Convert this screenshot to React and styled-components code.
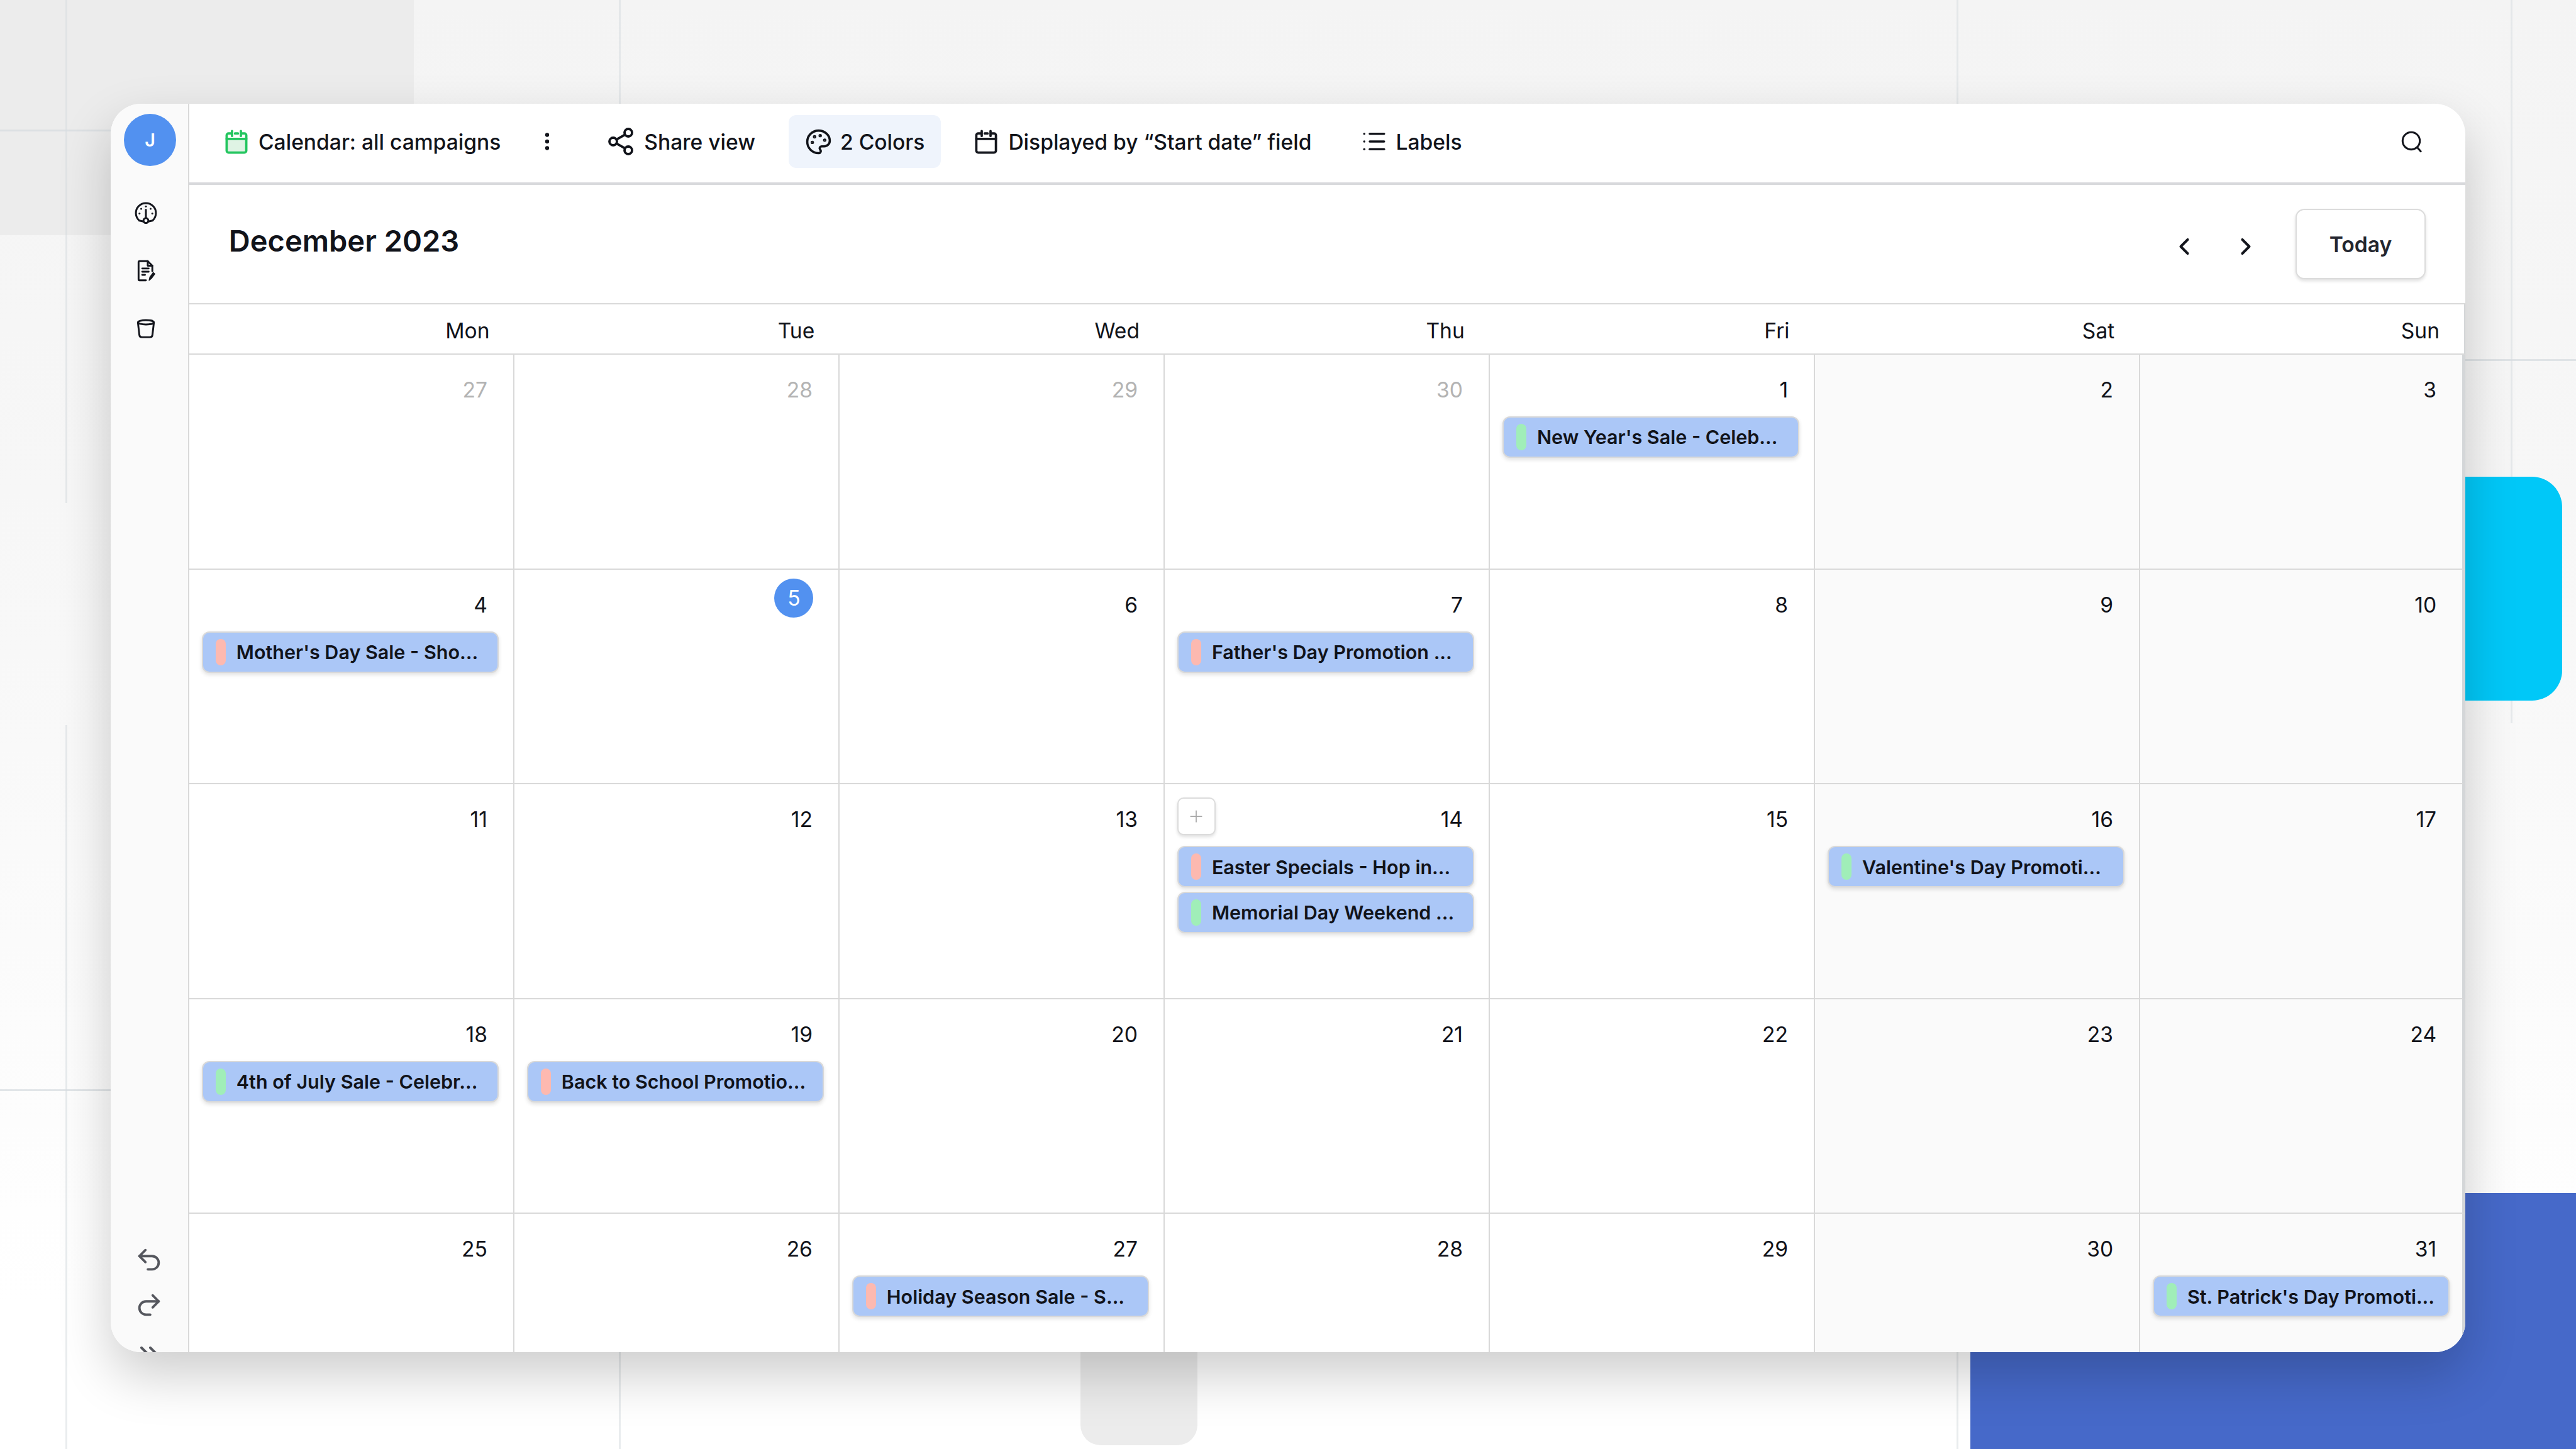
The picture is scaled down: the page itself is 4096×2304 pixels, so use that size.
import React from "react";
import styled, { createGlobalStyle } from "styled-components";
import {
  ChevronLeft,
  ChevronRight,
  ChevronsRight,
  EllipsisVertical,
  List,
  Palette,
  Plus,
  Redo2,
  Share2,
  Undo2,
} from "lucide-react";

const weekDays = ["Mon", "Tue", "Wed", "Thu", "Fri", "Sat", "Sun"];

const PINK = "#fdb9b0";
const GREEN = "#a0eeb8";

const days = [
  { n: 27, muted: true },
  { n: 28, muted: true },
  { n: 29, muted: true },
  { n: 30, muted: true },
  { n: 1, events: [{ title: "New Year's Sale - Celeb...", color: GREEN }] },
  { n: 2 },
  { n: 3 },
  { n: 4, events: [{ title: "Mother's Day Sale - Sho...", color: PINK }] },
  { n: 5, today: true },
  { n: 6 },
  { n: 7, events: [{ title: "Father's Day Promotion ...", color: PINK }] },
  { n: 8 },
  { n: 9 },
  { n: 10 },
  { n: 11 },
  { n: 12 },
  { n: 13 },
  {
    n: 14,
    plus: true,
    events: [
      { title: "Easter Specials - Hop in...", color: PINK },
      { title: "Memorial Day Weekend ...", color: GREEN },
    ],
  },
  { n: 15 },
  { n: 16, events: [{ title: "Valentine's Day Promoti...", color: GREEN }] },
  { n: 17 },
  { n: 18, events: [{ title: "4th of July Sale - Celebr...", color: GREEN }] },
  { n: 19, events: [{ title: "Back to School Promotio...", color: PINK }] },
  { n: 20 },
  { n: 21 },
  { n: 22 },
  { n: 23 },
  { n: 24 },
  { n: 25 },
  { n: 26 },
  { n: 27, events: [{ title: "Holiday Season Sale - S...", color: PINK }] },
  { n: 28 },
  { n: 29 },
  { n: 30 },
  { n: 31, events: [{ title: "St. Patrick's Day Promoti...", color: GREEN }] },
];

const CalendarIcon = ({ color = "#14161d", fill = "none" }) => (
  <svg width="38" height="39" viewBox="0 0 24 25" fill="none" stroke={color} strokeWidth="2.4" strokeLinecap="round" strokeLinejoin="round">
    <path d="M2 10h20v11.5a2 2 0 0 1-2 2H4a2 2 0 0 1-2-2Z" fill={fill} stroke="none" />
    <path d="M6 4H4a2 2 0 0 0-2 2v15.5a2 2 0 0 0 2 2h16a2 2 0 0 0 2-2V6a2 2 0 0 0-2-2h-2" />
    <path d="M7.5 1.5v5M16.5 1.5v5M10.5 4h3M2 9.5h20" />
  </svg>
);

const GaugeIcon = () => (
  <svg width="36" height="36" viewBox="0 0 24 24" fill="none" stroke="#14161d" strokeWidth="2" strokeLinecap="round" strokeLinejoin="round">
    <path d="M9.5 21.5 5 20.5a10.6 10.6 0 1 1 14 0l-4.5 1" />
    <circle cx="12" cy="20.5" r="2.6" />
    <path d="M12 17.5V9" />
    <g fill="#14161d" stroke="none">
      <circle cx="12" cy="5.5" r="1" />
      <circle cx="7" cy="8" r="1" />
      <circle cx="17" cy="8" r="1" />
      <circle cx="5.2" cy="13" r="1" />
      <circle cx="18.8" cy="13" r="1" />
    </g>
  </svg>
);

const NoteIcon = () => (
  <svg width="30" height="35" viewBox="0 0 20 24" fill="none" stroke="#14161d" strokeWidth="2" strokeLinecap="round" strokeLinejoin="round">
    <path d="M10 22.5H3a1 1 0 0 1-1-1v-19a1 1 0 0 1 1-1h9l5 5v6" />
    <path d="M12 1.5v5h5M6 9.5h7M6 13h7M6 16.5h3" />
    <path d="m13.5 22.5.8-3.5 3.7-5 1.7 1.4-3.7 5Z" fill="#14161d" strokeWidth="1" />
  </svg>
);

const BucketIcon = () => (
  <svg width="32" height="33" viewBox="0 0 24 24" fill="none" stroke="#14161d" strokeWidth="2.2" strokeLinecap="round" strokeLinejoin="round">
    <ellipse cx="12" cy="4.5" rx="9.5" ry="2.6" />
    <path d="m2.5 5 1.7 14.5a3 3 0 0 0 3 2.7h9.6a3 3 0 0 0 3-2.7L21.5 5" />
  </svg>
);

const SearchIcon = () => (
  <svg width="37" height="35" viewBox="0 0 24 23" fill="none" stroke="#14161d" strokeWidth="2" strokeLinecap="round">
    <circle cx="11" cy="10.5" r="9" />
    <path d="m17.5 17.5 3.5 4" />
  </svg>
);

const App = () => (
  <>
    <GlobalStyle />
    <Page>
      <CornerBlock />
      <GridLine $x={104} $y={0} $h={800} />
      <GridLine $x={984} $y={0} $h={2304} />
      <GridLine $x={3111} $y={0} $h={2304} />
      <GridLine $x={3992} $y={0} $h={1150} />
      <GridLine $x={104} $y={1153} $h={1151} />
      <GridRule $x={0} $y={206} $w={176} />
      <GridRule $x={0} $y={1732} $w={176} />
      <GridRule $x={3920} $y={571} $w={176} />
      <CyanBlock />
      <TabBlock />
      <BlueBlock />

      <Panel>
        <Rail>
          <Avatar>J</Avatar>
          <RailNav>
            <RailSlot><GaugeIcon /></RailSlot>
            <RailSlot><NoteIcon /></RailSlot>
            <RailSlot><BucketIcon /></RailSlot>
          </RailNav>
          <RailFooter>
            <RailSlot><Undo2 size={46} strokeWidth={2} /></RailSlot>
            <RailSlot><Redo2 size={46} strokeWidth={2} /></RailSlot>
            <CollapseSlot><ChevronsRight size={50} strokeWidth={2} /></CollapseSlot>
          </RailFooter>
        </Rail>

        <Main>
          <Toolbar>
            <ViewName>
              <CalendarIcon color="#22c55e" fill="#dff3e4" />
              Calendar: all campaigns
            </ViewName>
            <MoreButton>
              <EllipsisVertical size={36} strokeWidth={2.2} />
            </MoreButton>
            <ToolButton>
              <Share2 size={48} strokeWidth={1.9} />
              Share view
            </ToolButton>
            <ToolButton $active>
              <Palette size={43} strokeWidth={2} />
              2 Colors
            </ToolButton>
            <ToolButton>
              <IconGap>
                <CalendarIcon />
              </IconGap>
              Displayed by “Start date” field
            </ToolButton>
            <ToolButton>
              <List size={42} strokeWidth={2} />
              Labels
            </ToolButton>
            <SearchButton>
              <SearchIcon />
            </SearchButton>
          </Toolbar>

          <MonthBar>
            <MonthTitle>December 2023</MonthTitle>
            <MonthNav>
              <ArrowButton><ChevronLeft size={44} strokeWidth={2.2} /></ArrowButton>
              <ArrowButton><ChevronRight size={44} strokeWidth={2.2} /></ArrowButton>
              <TodayButton>Today</TodayButton>
            </MonthNav>
          </MonthBar>

          <WeekHeader>
            {weekDays.map((name) => (
              <WeekDay key={name}>{name}</WeekDay>
            ))}
          </WeekHeader>

          <MonthGrid>
            {days.map((day, i) => (
              <DayCell key={i} $weekend={i % 7 >= 5} $last={i % 7 === 6}>
                <DayTop>
                  {day.plus && (
                    <AddButton>
                      <Plus size={30} strokeWidth={1.4} />
                    </AddButton>
                  )}
                  {day.today ? (
                    <TodayMark>{day.n}</TodayMark>
                  ) : (
                    <DayNumber $muted={day.muted}>{day.n}</DayNumber>
                  )}
                </DayTop>
                <EventList>
                  {(day.events || []).map((ev) => (
                    <EventChip key={ev.title}>
                      <EventMark $color={ev.color} />
                      <EventTitle>{ev.title}</EventTitle>
                    </EventChip>
                  ))}
                </EventList>
              </DayCell>
            ))}
          </MonthGrid>
        </Main>
      </Panel>
    </Page>
  </>
);

export default App;

const GlobalStyle = createGlobalStyle`
  html, body {
    margin: 0;
    padding: 0;
    background: #fff;
  }
  * {
    box-sizing: border-box;
  }
`;

const Page = styled.div`
  position: relative;
  width: 4096px;
  height: 2304px;
  overflow: hidden;
  padding: 165px 0 0 176px;
  font-family: Inter, "Liberation Sans", sans-serif;
  color: #11131a;
  background: linear-gradient(180deg, #f4f4f4 0%, #f8f8f8 45%, #fbfbfb 65%, #fff 90%);
`;

const CornerBlock = styled.div`
  position: absolute;
  left: 0;
  top: 0;
  width: 658px;
  height: 374px;
  background: #ececec;
`;

const GridLine = styled.div`
  position: absolute;
  left: ${(p) => p.$x}px;
  top: ${(p) => p.$y}px;
  width: 3px;
  height: ${(p) => p.$h}px;
  background: rgba(215, 220, 224, 0.55);
`;

const GridRule = styled.div`
  position: absolute;
  left: ${(p) => p.$x}px;
  top: ${(p) => p.$y}px;
  width: ${(p) => p.$w}px;
  height: 3px;
  background: rgba(215, 220, 224, 0.75);
`;

const CyanBlock = styled.div`
  position: absolute;
  left: 3800px;
  top: 758px;
  width: 274px;
  height: 356px;
  border-radius: 48px;
  background: #00c8f8;
`;

const TabBlock = styled.div`
  position: absolute;
  left: 1718px;
  top: 1900px;
  width: 186px;
  height: 398px;
  border-radius: 32px;
  background: #ececec;
`;

const BlueBlock = styled.div`
  position: absolute;
  left: 3133px;
  top: 1897px;
  width: 963px;
  height: 407px;
  background: #4669c9;
`;

const Panel = styled.div`
  position: relative;
  display: flex;
  width: 3744px;
  height: 1985px;
  border-radius: 48px;
  overflow: hidden;
  background: #fff;
  box-shadow: 0 36px 84px rgba(0, 0, 0, 0.2);
`;

const Rail = styled.aside`
  flex: none;
  display: flex;
  flex-direction: column;
  width: 124.8px;
  padding-top: 16px;
  background: #fafafa;
  border-right: 2.4px solid #d9d9d9;
`;

const Avatar = styled.div`
  display: flex;
  align-items: center;
  justify-content: center;
  width: 83px;
  height: 83px;
  margin-left: 21px;
  border-radius: 50%;
  background: #5291f0;
  color: #fff;
  font-size: 28.8px;
  font-weight: 600;
`;

const RailNav = styled.nav`
  display: flex;
  flex-direction: column;
  gap: 44px;
  margin: 50px 0 0 32px;
`;

const RailFooter = styled.div`
  display: flex;
  flex-direction: column;
  gap: 24px;
  margin: auto 0 -27px 37px;
  color: #55575e;
`;

const RailSlot = styled.div`
  display: flex;
  align-items: center;
  justify-content: center;
  width: 48px;
  height: 48px;
`;

const CollapseSlot = styled(RailSlot)`
  margin-top: 6px;
`;

const Main = styled.div`
  flex: 1;
  min-width: 0;
  display: flex;
  flex-direction: column;
`;

const Toolbar = styled.header`
  flex: none;
  display: flex;
  align-items: center;
  height: 129.4px;
  padding: 0 66px 5px 56.6px;
  border-bottom: 4.8px solid #d8d9dc;
`;

const ViewName = styled.div`
  display: flex;
  align-items: center;
  gap: 15.6px;
  font-size: 33.6px;
  font-weight: 500;
  white-space: nowrap;
`;

const MoreButton = styled.div`
  display: flex;
  align-items: center;
  margin: 0 49px 0 56px;
`;

const ToolButton = styled.div`
  display: flex;
  align-items: center;
  gap: 13px;
  height: 84px;
  padding: 0 26px;
  margin-right: 27px;
  border-radius: 12px;
  font-size: 33.6px;
  font-weight: 500;
  white-space: nowrap;
  background: ${(p) => (p.$active ? "#eff4fc" : "transparent")};
`;

const IconGap = styled.span`
  display: flex;
  margin-right: 3px;
`;

const SearchButton = styled.div`
  display: flex;
  margin-left: auto;
`;

const MonthBar = styled.div`
  flex: none;
  display: flex;
  align-items: center;
  justify-content: space-between;
  height: 190px;
  padding: 0 63px 0 63px;
  border-bottom: 2.4px solid #d9d9d9;
`;

const MonthTitle = styled.h1`
  margin: 0 0 10px;
  font-size: 47px;
  font-weight: 600;
  line-height: 1.2;
`;

const MonthNav = styled.div`
  display: flex;
  align-items: center;
`;

const ArrowButton = styled.div`
  display: flex;
  align-items: center;
  justify-content: center;
  width: 44px;
  height: 44px;
  margin-right: 54px;
  color: #14161d;
  position: relative;
  top: 4px;
`;

const TodayButton = styled.div`
  display: flex;
  align-items: center;
  justify-content: center;
  width: 207px;
  height: 112px;
  margin-left: 3px;
  border: 2.4px solid #dcdcdc;
  border-radius: 14px;
  background: #fff;
  box-shadow: 0 3px 5px rgba(0, 0, 0, 0.12);
  color: #23262f;
  font-size: 33.6px;
  font-weight: 600;
`;

const WeekHeader = styled.div`
  flex: none;
  display: grid;
  grid-template-columns: repeat(7, 1fr);
  height: 79.6px;
  border-bottom: 2.4px solid #d9d9d9;
  border-right: 2.4px solid #d4d6d8;
`;

const WeekDay = styled.div`
  display: flex;
  align-items: center;
  justify-content: flex-end;
  padding: 4px 39px 0 0;
  font-size: 33.6px;
  font-weight: 400;
`;

const MonthGrid = styled.div`
  display: grid;
  grid-template-columns: repeat(7, 1fr);
  grid-auto-rows: 341.6px;
`;

const DayCell = styled.div`
  min-width: 0;
  padding: 14px 22.4px 0 20px;
  background: ${(p) => (p.$weekend ? "#fafafa" : "#fff")};
  border-right: ${(p) => (p.$last ? "5.6px solid #d4d6d8" : "2.4px solid #d9d9d9")};
  border-bottom: 2.4px solid #d9d9d9;
`;

const DayTop = styled.div`
  display: flex;
  align-items: flex-start;
  justify-content: flex-end;
  height: 84px;
`;

const DayNumber = styled.span`
  margin: 22px 18.5px 0 0;
  font-size: 33.6px;
  line-height: 40px;
  font-weight: 400;
  color: ${(p) => (p.$muted ? "#b3b3b3" : "#11131a")};
`;

const TodayMark = styled.span`
  display: flex;
  align-items: center;
  justify-content: center;
  width: 62px;
  height: 62px;
  margin-right: 17px;
  border-radius: 50%;
  background: #5291f0;
  color: #fff;
  font-size: 33.6px;
`;

const AddButton = styled.div`
  display: flex;
  align-items: center;
  justify-content: center;
  width: 61px;
  height: 60px;
  margin: 7px auto 0 0;
  border: 2.4px solid #dcdcdc;
  border-radius: 10px;
  background: #fff;
  box-shadow: 0 3px 5px rgba(0, 0, 0, 0.12);
  color: #a8a8a8;
`;

const EventList = styled.div`
  display: flex;
  flex-direction: column;
  gap: 6.4px;
`;

const EventChip = styled.div`
  display: flex;
  align-items: center;
  gap: 17px;
  width: 472px;
  height: 66px;
  padding-left: 20px;
  border: 2.4px solid #d9d9d9;
  border-radius: 12px;
  background: #abc7f7;
  box-shadow: 0 3px 6px rgba(0, 0, 0, 0.12);
`;

const EventMark = styled.span`
  flex: none;
  width: 16px;
  height: 42px;
  border-radius: 8px;
  background: ${(p) => p.$color};
`;

const EventTitle = styled.span`
  font-size: 30.5px;
  font-weight: 600;
  white-space: nowrap;
  overflow: hidden;
`;
